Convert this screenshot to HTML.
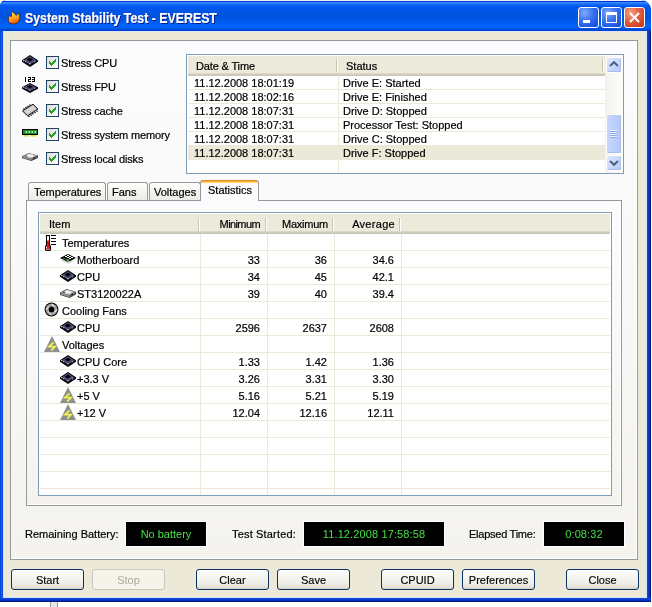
<!DOCTYPE html>
<html><head><meta charset="utf-8">
<style>
*{margin:0;padding:0;box-sizing:border-box}
html,body{width:652px;height:607px;overflow:hidden;background:#fff}
body{position:relative;will-change:transform;font-family:"Liberation Sans",sans-serif;font-size:11px;color:#000}
.a{position:absolute}
.t{position:absolute;white-space:nowrap;line-height:14px;-webkit-text-stroke:0.2px #000}
svg{position:absolute;overflow:visible}
#win{left:0;top:0;width:651px;height:602px;background:#0842d8;border-radius:6px 10px 0 0;overflow:hidden}
#title{left:0;top:0;width:651px;height:31px;
 background:linear-gradient(to bottom,#e8f0f8 0px,#e8f0f8 1px,#0831d9 1px,#0831d9 2px,#3d95ff 2px,#1a70f8 4px,#0058ee 6px,#0055e5 12px,#0053e0 18px,#0060f6 24px,#0066ff 27px,#0050dc 29px,#003dd0 31px)}
#client{left:3px;top:31px;width:644px;height:567px;background:#ece9d8;border-left:1px solid #d0e4f8;border-top:1px solid #d8e8f8;border-right:1px solid #d0e4f8;border-bottom:1px solid #d0e4f8}
#lframe{left:0;top:31px;width:3px;height:571px;background:linear-gradient(to right,#0038d0,#1060f0,#0848e0)}
.pane{position:absolute;border:1px solid #919b9c;background:linear-gradient(to bottom,#fcfcfe,#f4f3ee)}
.pane:after{content:"";position:absolute;right:0;bottom:0;left:0;top:0;border-right:1px solid #fff;border-bottom:1px solid #fff}
.btn{position:absolute;top:569px;width:73px;height:21px;border:1px solid #0c3260;border-radius:3px;
 background:linear-gradient(to bottom,#ffffff 0%,#f6f6f2 30%,#efeee8 70%,#e3e1d8 90%,#d6d0c5 100%);
 text-align:center;line-height:19px;font-size:11px;padding-top:1px;-webkit-text-stroke:0.15px #000}
.btn.dis{-webkit-text-stroke:0}
.btn.dis{border-color:#c9c7ba;background:#f5f4ea;color:#aca899}
.lcd{position:absolute;top:522px;height:24px;background:#000;color:#44e044;text-align:center;line-height:24px;letter-spacing:0.12px;box-shadow:0 0 0 1px #fff}
.hdr{position:absolute;background:linear-gradient(to bottom,#ebeadb 0,#ebeadb 17px,#e2decd 17px,#d6d2c2 18px,#cbc7b8 19px,#cbc7b8 20px)}
.sep{position:absolute;width:2px;border-left:1px solid #c7c5b2;border-right:1px solid #fff}
.gh{position:absolute;height:1px;background:#ebe9da}
.gv{position:absolute;width:1px;background:#ebe9da}
.cb{position:absolute;width:13px;height:13px;border:1px solid #1f4468;background:linear-gradient(135deg,#dcdcd7 0%,#f4f4f0 60%,#fff 100%)}
.tab{position:absolute;top:182px;height:18px;border:1px solid #919b9c;border-bottom:none;border-radius:3px 3px 0 0;background:linear-gradient(to bottom,#fff,#f3f2ee 60%,#ecebe5)}
.r{text-align:right}
.sbb{position:absolute;width:16px;border:1px solid #fff;border-radius:2px;box-shadow:inset -1px -1px 0 #a9bdee;background:linear-gradient(135deg,#e0e9fe,#c4d4fb 60%,#b6c9f6)}
</style></head><body>


<div id="win" class="a">
 <div id="title" class="a"></div>
 <div id="lframe" class="a"></div>
 <div id="client" class="a"></div>
</div>
<div class="a" style="left:647px;top:31px;width:4px;height:571px;background:linear-gradient(to right,#1444d8 0,#1444d8 1px,#0a3acc 1px,#0a3acc 2px,#0430b8 2px,#0430b8 3px,#001a88 3px)"></div>
<div class="a" style="left:0;top:598px;width:651px;height:4px;background:linear-gradient(to bottom,#1444d8 0,#1444d8 1px,#0a3acc 1px,#0a3acc 2px,#0430b8 2px,#0430b8 3px,#001a88 3px)"></div>
<div class="a" style="left:50px;top:602px;width:8px;height:5px;background:#e8e6de;border-left:1px solid #999;border-right:1px solid #999"></div>

<!-- flame -->
<svg style="left:4px;top:6px" width="20" height="20" viewBox="0 0 20 20">
 <defs><linearGradient id="fl" x1="0" y1="0" x2="0.3" y2="1"><stop offset="0" stop-color="#fff8c0"/><stop offset="0.35" stop-color="#ffc830"/><stop offset="0.7" stop-color="#ff9a20"/><stop offset="1" stop-color="#e85a10"/></linearGradient></defs>
 <path d="M4.6,15.5 C4,13.5 4.5,11.5 5.3,9.6 L7.4,10.6 C7.4,8.5 7.6,6.5 8.1,4.9 C9.5,6.5 11,8 12.3,9.4 L14.5,7.1 C15.8,9 16,11.5 15.4,13.5 C14.6,16.5 12.5,17.9 9.9,17.9 C7.5,17.9 5.4,17.2 4.6,15.5 Z" fill="url(#fl)" stroke="#3a1a10" stroke-width="0.7"/>
</svg>
<div class="t" style="left:25px;top:10px;font-weight:bold;font-size:14px;line-height:16px;color:#fff;-webkit-text-stroke:0.2px #fff;text-shadow:1px 1px 0 #0a1883;transform:scaleX(0.882);transform-origin:0 0">System Stability Test - EVEREST</div>

<!-- title buttons -->
<div class="a" style="left:578px;top:7px;width:21px;height:21px;border:1px solid #fff;border-radius:3px;background:radial-gradient(circle at 30% 25%,#7fa8ff 0%,#3c78f0 40%,#1f5ce8 70%,#1848c8 100%)"></div>
<div class="a" style="left:583px;top:20px;width:7px;height:3px;background:#fff"></div>
<div class="a" style="left:601px;top:7px;width:21px;height:21px;border:1px solid #fff;border-radius:3px;background:radial-gradient(circle at 30% 25%,#7fa8ff 0%,#3c78f0 40%,#1f5ce8 70%,#1848c8 100%)"></div>
<div class="a" style="left:606px;top:12px;width:11px;height:11px;border:1px solid #fff;border-top-width:3px"></div>
<div class="a" style="left:624px;top:7px;width:21px;height:21px;border:1px solid #fff;border-radius:3px;background:radial-gradient(circle at 30% 25%,#f8a080 0%,#e06040 45%,#d04020 80%,#c03818 100%)"></div>
<svg style="left:629px;top:12px" width="11" height="11" viewBox="0 0 11 11"><path d="M1,1 L10,10 M10,1 L1,10" stroke="#fff" stroke-width="2"/></svg>

<!-- outer pane -->
<div class="pane" style="left:10px;top:40px;width:628px;height:520px"></div>

<!-- checkboxes -->
<svg style="left:22px;top:55px" width="16" height="12" viewBox="0 0 16 12"><polygon points="0,5.2 8,0 16,5.2 16,6.8 8,12 0,6.8" fill="#050508"/>
   <polygon points="1.6,5.4 8,1.3 14.4,5.4 8,9.6" fill="#5a5a82"/>
   <polygon points="3.4,5.4 8,2.5 12.6,5.4 8,8.3" fill="#48486c"/>
   <polygon points="4.6,4.4 7.8,2.4 11,4.4 7.8,6.4" fill="#000"/>
   <rect x="1" y="5" width="1.2" height="1.2" fill="#b8b8e0"/><rect x="3" y="6" width="1.2" height="1.2" fill="#9a9ac8"/><rect x="7" y="8" width="1.3" height="1.3" fill="#b8b8e0"/><rect x="12" y="6.2" width="1.2" height="1.2" fill="#8a8ab8"/></svg>
<div class="cb" style="left:46px;top:56px"><svg style="left:-1px;top:-1px" width="13" height="13" viewBox="0 0 13 13"><path d="M9,3h1v1h-1z M8,4h2v1h-2z M3,5h1v1h-1z M7,5h3v1h-3z M3,6h2v1h-2z M6,6h3v1h-3z M3,7h5v1h-5z M4,8h3v1h-3z M5,9h1v1h-1z" fill="#21a121" shape-rendering="crispEdges"/></svg></div>
<div class="t" style="left:61px;top:56px;letter-spacing:-0.15px">Stress CPU</div>

<svg style="left:24px;top:77px" width="12" height="5" viewBox="0 0 12 5" shape-rendering="crispEdges"><path d="M1,0h1v5h-1z M4,0h3v1h-3z M6,1h1v1h-1z M4,2h3v1h-3z M4,3h1v1h-1z M4,4h3v1h-3z M8,0h3v1h-3z M10,1h1v1h-1z M8,2h3v1h-3z M10,3h1v1h-1z M8,4h3v1h-3z" fill="#000"/></svg>
<svg style="left:22px;top:83px" width="16" height="10" viewBox="0 0 16 12" preserveAspectRatio="none"><polygon points="0,5.2 8,0 16,5.2 16,6.8 8,12 0,6.8" fill="#050508"/>
   <polygon points="1.6,5.4 8,1.3 14.4,5.4 8,9.6" fill="#5a5a82"/>
   <polygon points="3.4,5.4 8,2.5 12.6,5.4 8,8.3" fill="#48486c"/>
   <polygon points="4.6,4.4 7.8,2.4 11,4.4 7.8,6.4" fill="#000"/>
   <rect x="1" y="5" width="1.2" height="1.2" fill="#b8b8e0"/><rect x="3" y="6" width="1.2" height="1.2" fill="#9a9ac8"/><rect x="7" y="8" width="1.3" height="1.3" fill="#b8b8e0"/><rect x="12" y="6.2" width="1.2" height="1.2" fill="#8a8ab8"/></svg>
<div class="cb" style="left:46px;top:80px"><svg style="left:-1px;top:-1px" width="13" height="13" viewBox="0 0 13 13"><path d="M9,3h1v1h-1z M8,4h2v1h-2z M3,5h1v1h-1z M7,5h3v1h-3z M3,6h2v1h-2z M6,6h3v1h-3z M3,7h5v1h-5z M4,8h3v1h-3z M5,9h1v1h-1z" fill="#21a121" shape-rendering="crispEdges"/></svg></div>
<div class="t" style="left:61px;top:80px;letter-spacing:-0.15px">Stress FPU</div>

<svg style="left:22px;top:103px" width="17" height="14" viewBox="0 0 17 14">
 <polygon points="0.5,8 11,1.2 16,6 5.5,12.8" fill="#bdbdbd" stroke="#111" stroke-width="1"/>
 <polygon points="2,8 11,2.3 14,5.5 5.5,11" fill="#d4d4d4"/>
 <path d="M2.5,6.5 l-1,-1 M4.5,5.2 l-1,-1 M6.5,3.9 l-1,-1 M8.5,2.6 l-1,-1 M6.5,12.8 l1,1 M8.5,11.5 l1,1 M10.5,10.2 l1,1 M12.5,8.9 l1,1 M14.5,7.6 l1,1" stroke="#000" stroke-width="1.3"/>
</svg>
<div class="cb" style="left:46px;top:104px"><svg style="left:-1px;top:-1px" width="13" height="13" viewBox="0 0 13 13"><path d="M9,3h1v1h-1z M8,4h2v1h-2z M3,5h1v1h-1z M7,5h3v1h-3z M3,6h2v1h-2z M6,6h3v1h-3z M3,7h5v1h-5z M4,8h3v1h-3z M5,9h1v1h-1z" fill="#21a121" shape-rendering="crispEdges"/></svg></div>
<div class="t" style="left:61px;top:104px;letter-spacing:-0.15px">Stress cache</div>

<svg style="left:22px;top:128px" width="16" height="9" viewBox="0 0 16 9">
 <rect x="0" y="1" width="16" height="6" fill="#000"/>
 <rect x="1" y="2" width="14" height="4" fill="#1f8a2a"/>
 <rect x="3.5" y="3" width="1.5" height="2" fill="#a0f0a0"/><rect x="6.5" y="3" width="1.5" height="2" fill="#a0f0a0"/><rect x="9.5" y="3" width="1.5" height="2" fill="#a0f0a0"/><rect x="12.5" y="3" width="1.5" height="2" fill="#a0f0a0"/>
 <rect x="1.5" y="7" width="5" height="1.5" fill="#d8e030"/><rect x="8.5" y="7" width="6" height="1.5" fill="#d8e030"/>
</svg>
<div class="cb" style="left:46px;top:128px"><svg style="left:-1px;top:-1px" width="13" height="13" viewBox="0 0 13 13"><path d="M9,3h1v1h-1z M8,4h2v1h-2z M3,5h1v1h-1z M7,5h3v1h-3z M3,6h2v1h-2z M6,6h3v1h-3z M3,7h5v1h-5z M4,8h3v1h-3z M5,9h1v1h-1z" fill="#21a121" shape-rendering="crispEdges"/></svg></div>
<div class="t" style="left:61px;top:128px;letter-spacing:-0.15px">Stress system memory</div>

<svg style="left:22px;top:153px" width="16" height="8" viewBox="0 0 16 9" preserveAspectRatio="none"><polygon points="0,3.6 6.5,0 16,2.8 16,5.6 9.5,9 0,6" fill="#4a4a4a"/>
   <polygon points="0.8,3.7 6.5,0.7 15.2,3 9.5,6.1" fill="#c4c4c4"/>
   <polygon points="9.5,6.1 15.2,3 15.2,5.2 9.5,8.2" fill="#5c5c5c"/>
   <polygon points="0.8,3.7 9.5,6.1 9.5,8.2 0.8,5.6" fill="#909090"/>
   <ellipse cx="8" cy="3" rx="3.4" ry="1.5" fill="#f0f0f0"/>
   <ellipse cx="4" cy="3.3" rx="1.4" ry="0.7" fill="#505050"/>
   <rect x="11.5" y="4.6" width="1.5" height="1.6" fill="#202020"/></svg>
<div class="cb" style="left:46px;top:152px"><svg style="left:-1px;top:-1px" width="13" height="13" viewBox="0 0 13 13"><path d="M9,3h1v1h-1z M8,4h2v1h-2z M3,5h1v1h-1z M7,5h3v1h-3z M3,6h2v1h-2z M6,6h3v1h-3z M3,7h5v1h-5z M4,8h3v1h-3z M5,9h1v1h-1z" fill="#21a121" shape-rendering="crispEdges"/></svg></div>
<div class="t" style="left:61px;top:152px;letter-spacing:-0.15px">Stress local disks</div>

<!-- log list -->
<div class="a" style="left:186px;top:54px;width:438px;height:120px;border:1px solid #7f9db9;background:#fff;overflow:hidden">
 <div class="hdr" style="left:1px;top:1px;width:417px;height:20px"></div>
 <div class="sep" style="left:149px;top:4px;height:13px"></div>
 <div class="sep" style="left:415px;top:4px;height:13px"></div>
 <!--LOG-->
 <div class="a" style="left:1px;top:90px;width:417px;height:14px;background:#ece9d8"></div>
 <div class="gh" style="left:1px;top:34px;width:417px"></div>
 <div class="gh" style="left:1px;top:48px;width:417px"></div>
 <div class="gh" style="left:1px;top:62px;width:417px"></div>
 <div class="gh" style="left:1px;top:76px;width:417px"></div>
 <div class="gh" style="left:1px;top:90px;width:417px"></div>
 <div class="gh" style="left:1px;top:104px;width:417px"></div>
 <div class="gv" style="left:151px;top:21px;height:98px"></div>
 <div class="t" style="left:7px;top:21px">11.12.2008 18:01:19</div>
 <div class="t" style="left:156px;top:21px">Drive E: Started</div>
 <div class="t" style="left:7px;top:35px">11.12.2008 18:02:16</div>
 <div class="t" style="left:156px;top:35px">Drive E: Finished</div>
 <div class="t" style="left:7px;top:49px">11.12.2008 18:07:31</div>
 <div class="t" style="left:156px;top:49px">Drive D: Stopped</div>
 <div class="t" style="left:7px;top:63px">11.12.2008 18:07:31</div>
 <div class="t" style="left:156px;top:63px">Processor Test: Stopped</div>
 <div class="t" style="left:7px;top:77px">11.12.2008 18:07:31</div>
 <div class="t" style="left:156px;top:77px">Drive C: Stopped</div>
 <div class="t" style="left:7px;top:91px">11.12.2008 18:07:31</div>
 <div class="t" style="left:156px;top:91px">Drive F: Stopped</div>
 <!--/LOG-->
 <div class="a" style="left:418px;top:1px;width:18px;height:117px;background:linear-gradient(to right,#f3f1ec,#fefefb)"></div>
 <div class="sbb" style="left:419px;top:2px;height:16px"></div>
 <svg style="left:422px;top:6px" width="10" height="6" viewBox="0 0 10 6"><path d="M1,5 L5,1.2 L9,5" stroke="#4d6185" stroke-width="2" fill="none"/></svg>
 <div class="sbb" style="left:419px;top:59px;height:40px;background:linear-gradient(to right,#c9d7fc,#bccffb 50%,#b4c8f8)"></div>
 <div class="a" style="left:423px;top:75px;width:7px;height:8px;background:repeating-linear-gradient(to bottom,#eef3fe 0,#eef3fe 1px,#8ca6e6 1px,#8ca6e6 2px)"></div>
 <div class="sbb" style="left:419px;top:100px;height:16px"></div>
 <svg style="left:422px;top:105px" width="10" height="6" viewBox="0 0 10 6"><path d="M1,1 L5,4.8 L9,1" stroke="#4d6185" stroke-width="2" fill="none"/></svg>
 <div class="t" style="left:9px;top:4px;letter-spacing:-0.15px">Date &amp; Time</div>
 <div class="t" style="left:159px;top:4px">Status</div>
</div>

<!-- status -->
<div class="t" style="left:25px;top:527px">Remaining Battery:</div>
<div class="lcd" style="left:126px;width:80px;letter-spacing:0">No battery</div>
<div class="t" style="left:232px;top:527px;letter-spacing:0.17px">Test Started:</div>
<div class="lcd" style="left:304px;width:140px">11.12.2008 17:58:58</div>
<div class="t" style="left:469px;top:527px;letter-spacing:-0.25px">Elapsed Time:</div>
<div class="lcd" style="left:544px;width:80px">0:08:32</div>

<!-- buttons -->
<div class="btn" style="left:11px">Start</div>
<div class="btn dis" style="left:92px">Stop</div>
<div class="btn" style="left:196px">Clear</div>
<div class="btn" style="left:277px">Save</div>
<div class="btn" style="left:381px">CPUID</div>
<div class="btn" style="left:462px">Preferences</div>
<div class="btn" style="left:566px">Close</div>

<!-- tab pane -->
<div class="pane" style="left:26px;top:200px;width:596px;height:306px"></div>
<div class="tab" style="left:28px;width:78px"></div>
<div class="t" style="left:34px;top:185px">Temperatures</div>
<div class="tab" style="left:107px;width:41px"></div>
<div class="t" style="left:112px;top:185px">Fans</div>
<div class="tab" style="left:149px;width:52px"></div>
<div class="t" style="left:154px;top:185px">Voltages</div>
<div class="a" style="left:200px;top:180px;width:59px;height:21px;border:1px solid #919b9c;border-top:none;border-bottom:none;border-radius:3px 3px 0 0;background:linear-gradient(to bottom,#e0882a 0,#e0882a 1px,#f8b640 1px,#f8b640 2px,#ffd46a 2px,#ffd46a 3px,#fff8e8 3px,#fcfcfe 4px)"></div>
<div class="t" style="left:208px;top:183px">Statistics</div>

<!-- stats list -->
<div class="a" id="sl" style="left:38px;top:212px;width:574px;height:284px;border:1px solid #7f9db9;background:#fff;overflow:hidden">
 <div class="hdr" style="left:1px;top:1px;width:570px;height:20px"></div>
 <div class="sep" style="left:159px;top:5px;height:13px"></div>
 <div class="sep" style="left:226px;top:5px;height:13px"></div>
 <div class="sep" style="left:293px;top:5px;height:13px"></div>
 <div class="sep" style="left:360px;top:5px;height:13px"></div>
 <!--STATS-->
 <div class="gh" style="left:1px;top:37px;width:570px"></div>
 <div class="gh" style="left:1px;top:54px;width:570px"></div>
 <div class="gh" style="left:1px;top:71px;width:570px"></div>
 <div class="gh" style="left:1px;top:88px;width:570px"></div>
 <div class="gh" style="left:1px;top:105px;width:570px"></div>
 <div class="gh" style="left:1px;top:122px;width:570px"></div>
 <div class="gh" style="left:1px;top:139px;width:570px"></div>
 <div class="gh" style="left:1px;top:156px;width:570px"></div>
 <div class="gh" style="left:1px;top:173px;width:570px"></div>
 <div class="gh" style="left:1px;top:190px;width:570px"></div>
 <div class="gh" style="left:1px;top:207px;width:570px"></div>
 <div class="gh" style="left:1px;top:224px;width:570px"></div>
 <div class="gh" style="left:1px;top:241px;width:570px"></div>
 <div class="gh" style="left:1px;top:258px;width:570px"></div>
 <div class="gh" style="left:1px;top:275px;width:570px"></div>
 <div class="gv" style="left:161px;top:21px;height:262px"></div>
 <div class="gv" style="left:228px;top:21px;height:262px"></div>
 <div class="gv" style="left:295px;top:21px;height:262px"></div>
 <div class="gv" style="left:362px;top:21px;height:262px"></div>
 <div class="t" style="left:23px;top:23px">Temperatures</div>
 <svg style="left:5px;top:21px" width="13" height="17" viewBox="0 0 13 17"><path d="M2.5,1.5 h3 v10.5 h1 v3.5 a1,1 0 0 1 -1,1 h-3 a1,1 0 0 1 -1,-1 v-3.5 h1 z" fill="#fff" stroke="#000" stroke-width="1.1"/><path d="M3,6.5 h2 v6 h1 v3 h-4 v-3 h1 z" fill="#d61a1a"/><rect x="2" y="12.5" width="1" height="2" fill="#ffb8b8"/><path d="M7,1.5 h5 M7,4.5 h5 M7,7.5 h5 M7,10.5 h5" stroke="#000" stroke-width="1.1"/></svg>
 <div class="t" style="left:38px;top:40px">Motherboard</div>
 <div class="t r" style="left:161px;top:40px;width:60px">33</div>
 <div class="t r" style="left:228px;top:40px;width:60px">36</div>
 <div class="t r" style="left:295px;top:40px;width:60px">34.6</div>
 <svg style="left:21px;top:41px" width="16" height="10" viewBox="0 0 16 10"><polygon points="1,6.5 8,3 15,6.5 8,10" fill="#b8c0b8" opacity="0.5"/>
   <polygon points="0,4 8,0 16,4 8,8" fill="#000"/>
   <path d="M7,1 h2 v1 h-2z M5,2 h2 v1 h-2z M9,2 h2 v1 h-2z M7,3 h2 v1 h-2z M11,3 h2 v1 h-2z M9,4 h2 v1 h-2z" fill="#fff"/>
   <rect x="3.4" y="4" width="1.2" height="1.2" fill="#b0b0b0"/><rect x="5.6" y="4.6" width="1.2" height="1.2" fill="#b0b0b0"/>
   <rect x="7" y="5.4" width="2.2" height="2.2" fill="#60d060"/></svg>
 <div class="t" style="left:38px;top:57px">CPU</div>
 <div class="t r" style="left:161px;top:57px;width:60px">34</div>
 <div class="t r" style="left:228px;top:57px;width:60px">45</div>
 <div class="t r" style="left:295px;top:57px;width:60px">42.1</div>
 <svg style="left:21px;top:57px" width="16" height="12" viewBox="0 0 16 12"><polygon points="0,5.2 8,0 16,5.2 16,6.8 8,12 0,6.8" fill="#050508"/>
   <polygon points="1.6,5.4 8,1.3 14.4,5.4 8,9.6" fill="#5a5a82"/>
   <polygon points="3.4,5.4 8,2.5 12.6,5.4 8,8.3" fill="#48486c"/>
   <polygon points="4.6,4.4 7.8,2.4 11,4.4 7.8,6.4" fill="#000"/>
   <rect x="1" y="5" width="1.2" height="1.2" fill="#b8b8e0"/><rect x="3" y="6" width="1.2" height="1.2" fill="#9a9ac8"/><rect x="7" y="8" width="1.3" height="1.3" fill="#b8b8e0"/><rect x="12" y="6.2" width="1.2" height="1.2" fill="#8a8ab8"/></svg>
 <div class="t" style="left:38px;top:74px">ST3120022A</div>
 <div class="t r" style="left:161px;top:74px;width:60px">39</div>
 <div class="t r" style="left:228px;top:74px;width:60px">40</div>
 <div class="t r" style="left:295px;top:74px;width:60px">39.4</div>
 <svg style="left:21px;top:76px" width="16" height="9" viewBox="0 0 16 9"><polygon points="0,3.6 6.5,0 16,2.8 16,5.6 9.5,9 0,6" fill="#4a4a4a"/>
   <polygon points="0.8,3.7 6.5,0.7 15.2,3 9.5,6.1" fill="#c4c4c4"/>
   <polygon points="9.5,6.1 15.2,3 15.2,5.2 9.5,8.2" fill="#5c5c5c"/>
   <polygon points="0.8,3.7 9.5,6.1 9.5,8.2 0.8,5.6" fill="#909090"/>
   <ellipse cx="8" cy="3" rx="3.4" ry="1.5" fill="#f0f0f0"/>
   <ellipse cx="4" cy="3.3" rx="1.4" ry="0.7" fill="#505050"/>
   <rect x="11.5" y="4.6" width="1.5" height="1.6" fill="#202020"/></svg>
 <div class="t" style="left:23px;top:91px">Cooling Fans</div>
 <svg style="left:5px;top:89px" width="15" height="15" viewBox="0 0 15 15"><circle cx="7.5" cy="7.5" r="6.9" fill="#000"/>
   <circle cx="7.5" cy="7.5" r="5.9" fill="#9a9a9a"/>
   <path d="M7.5,2.2 Q10.5,4 9.8,7.5 M12.8,7.5 Q11,10.5 7.5,9.8 M7.5,12.8 Q4.5,11 5.2,7.5 M2.2,7.5 Q4,4.5 7.5,5.2" stroke="#d8d8d8" stroke-width="1.7" fill="none"/>
   <circle cx="7.5" cy="7.5" r="2.9" fill="#000"/></svg>
 <div class="t" style="left:38px;top:108px">CPU</div>
 <div class="t r" style="left:161px;top:108px;width:60px">2596</div>
 <div class="t r" style="left:228px;top:108px;width:60px">2637</div>
 <div class="t r" style="left:295px;top:108px;width:60px">2608</div>
 <svg style="left:21px;top:108px" width="16" height="12" viewBox="0 0 16 12"><polygon points="0,5.2 8,0 16,5.2 16,6.8 8,12 0,6.8" fill="#050508"/>
   <polygon points="1.6,5.4 8,1.3 14.4,5.4 8,9.6" fill="#5a5a82"/>
   <polygon points="3.4,5.4 8,2.5 12.6,5.4 8,8.3" fill="#48486c"/>
   <polygon points="4.6,4.4 7.8,2.4 11,4.4 7.8,6.4" fill="#000"/>
   <rect x="1" y="5" width="1.2" height="1.2" fill="#b8b8e0"/><rect x="3" y="6" width="1.2" height="1.2" fill="#9a9ac8"/><rect x="7" y="8" width="1.3" height="1.3" fill="#b8b8e0"/><rect x="12" y="6.2" width="1.2" height="1.2" fill="#8a8ab8"/></svg>
 <div class="t" style="left:23px;top:125px">Voltages</div>
 <svg style="left:5px;top:123px" width="16" height="16" viewBox="0 0 16 16"><polygon points="8,0 16,16 0,16" fill="#8e8e8e"/>
   <path d="M9.6,6.4 L5,10.6 L11,10.6 L7.2,14.6" stroke="#f0f050" stroke-width="1.8" fill="none" stroke-linejoin="miter"/></svg>
 <div class="t" style="left:38px;top:142px">CPU Core</div>
 <div class="t r" style="left:161px;top:142px;width:60px">1.33</div>
 <div class="t r" style="left:228px;top:142px;width:60px">1.42</div>
 <div class="t r" style="left:295px;top:142px;width:60px">1.36</div>
 <svg style="left:21px;top:142px" width="16" height="12" viewBox="0 0 16 12"><polygon points="0,5.2 8,0 16,5.2 16,6.8 8,12 0,6.8" fill="#050508"/>
   <polygon points="1.6,5.4 8,1.3 14.4,5.4 8,9.6" fill="#5a5a82"/>
   <polygon points="3.4,5.4 8,2.5 12.6,5.4 8,8.3" fill="#48486c"/>
   <polygon points="4.6,4.4 7.8,2.4 11,4.4 7.8,6.4" fill="#000"/>
   <rect x="1" y="5" width="1.2" height="1.2" fill="#b8b8e0"/><rect x="3" y="6" width="1.2" height="1.2" fill="#9a9ac8"/><rect x="7" y="8" width="1.3" height="1.3" fill="#b8b8e0"/><rect x="12" y="6.2" width="1.2" height="1.2" fill="#8a8ab8"/></svg>
 <div class="t" style="left:38px;top:159px">+3.3 V</div>
 <div class="t r" style="left:161px;top:159px;width:60px">3.26</div>
 <div class="t r" style="left:228px;top:159px;width:60px">3.31</div>
 <div class="t r" style="left:295px;top:159px;width:60px">3.30</div>
 <svg style="left:21px;top:159px" width="16" height="12" viewBox="0 0 16 12"><polygon points="0,5.2 8,0 16,5.2 16,6.8 8,12 0,6.8" fill="#050508"/>
   <polygon points="1.6,5.4 8,1.3 14.4,5.4 8,9.6" fill="#5a5a82"/>
   <polygon points="3.4,5.4 8,2.5 12.6,5.4 8,8.3" fill="#48486c"/>
   <polygon points="4.6,4.4 7.8,2.4 11,4.4 7.8,6.4" fill="#000"/>
   <rect x="1" y="5" width="1.2" height="1.2" fill="#b8b8e0"/><rect x="3" y="6" width="1.2" height="1.2" fill="#9a9ac8"/><rect x="7" y="8" width="1.3" height="1.3" fill="#b8b8e0"/><rect x="12" y="6.2" width="1.2" height="1.2" fill="#8a8ab8"/></svg>
 <div class="t" style="left:38px;top:176px">+5 V</div>
 <div class="t r" style="left:161px;top:176px;width:60px">5.16</div>
 <div class="t r" style="left:228px;top:176px;width:60px">5.21</div>
 <div class="t r" style="left:295px;top:176px;width:60px">5.19</div>
 <svg style="left:21px;top:174px" width="16" height="16" viewBox="0 0 16 16"><polygon points="8,0 16,16 0,16" fill="#8e8e8e"/>
   <path d="M9.6,6.4 L5,10.6 L11,10.6 L7.2,14.6" stroke="#f0f050" stroke-width="1.8" fill="none" stroke-linejoin="miter"/></svg>
 <div class="t" style="left:38px;top:193px">+12 V</div>
 <div class="t r" style="left:161px;top:193px;width:60px">12.04</div>
 <div class="t r" style="left:228px;top:193px;width:60px">12.16</div>
 <div class="t r" style="left:295px;top:193px;width:60px">12.11</div>
 <svg style="left:21px;top:191px" width="16" height="16" viewBox="0 0 16 16"><polygon points="8,0 16,16 0,16" fill="#8e8e8e"/>
   <path d="M9.6,6.4 L5,10.6 L11,10.6 L7.2,14.6" stroke="#f0f050" stroke-width="1.8" fill="none" stroke-linejoin="miter"/></svg>
 <!--/STATS-->
 <div class="t" style="left:10px;top:4px">Item</div>
 <div class="t r" style="left:161px;top:4px;width:60px;letter-spacing:-0.6px">Minimum</div>
 <div class="t r" style="left:228px;top:4px;width:61px;letter-spacing:-0.25px">Maximum</div>
 <div class="t r" style="left:295px;top:4px;width:61px;letter-spacing:0.3px">Average</div>
</div>

</body></html>
